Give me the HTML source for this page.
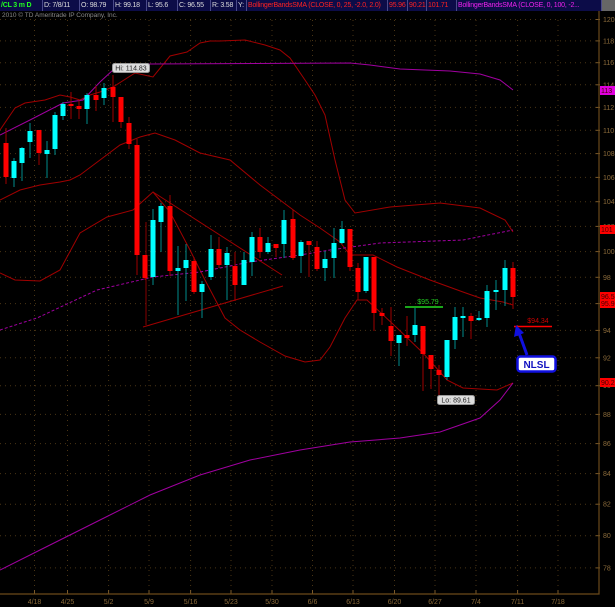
<!DOCTYPE html>
<html><head><meta charset="utf-8"><style>
html,body{margin:0;padding:0;background:#000;width:615px;height:607px;overflow:hidden;font-family:"Liberation Sans",sans-serif}
#hdr{position:absolute;left:0;top:0;width:615px;height:11px;background:#0c0c48;display:flex;font-size:7px;letter-spacing:-0.2px;line-height:11px;white-space:nowrap}
#hdr span{border-right:1px solid #4a4a8a;padding:0 1px;overflow:hidden;box-sizing:border-box}
#copy{position:absolute;left:2px;top:12px;font-size:6.5px;color:#888}
svg{position:absolute;left:0;top:0}
</style></head><body>
<svg id="s" width="615" height="607" viewBox="0 0 615 607"></svg>
<div id="hdr">
<span style="width:43px;color:#2f2;font-weight:bold">/CL 3 m D</span>
<span style="width:37px;color:#ddd">D: 7/8/11</span>
<span style="width:34px;color:#ddd">O: 98.79</span>
<span style="width:33px;color:#ddd">H: 99.18</span>
<span style="width:31px;color:#ddd">L: 95.6</span>
<span style="width:33px;color:#ddd">C: 96.55</span>
<span style="width:26px;color:#ddd">R: 3.58</span>
<span style="width:10px;color:#ddd">Y:</span>
<span style="width:141px;color:#f22">BollingerBandsSMA (CLOSE, 0, 25, -2.0, 2.0)</span>
<span style="width:20px;color:#f22">95.96</span>
<span style="width:19px;color:#f22">90.21</span>
<span style="width:30px;color:#f22">101.71</span>
<span style="width:145px;color:#e2e">BollingerBandsSMA (CLOSE, 0, 100, -2...</span>
<span style="width:13px;background:#666;border:none"></span>
</div>
<div id="copy">2010 © TD Ameritrade IP Company, Inc.</div>
<script>
var s=document.getElementById('s'),h='';
function Y(p){return 6114-1273*Math.log(p);}
for(var p=78;p<=120;p+=2){var y=Y(p).toFixed(1);
h+='<line x1="0" y1="'+y+'" x2="596" y2="'+y+'" stroke="#4a3515" stroke-width="1" stroke-dasharray="1,4"/>';
h+='<line x1="596" y1="'+y+'" x2="600" y2="'+y+'" stroke="#7a5a2a"/>';
h+='<text x="603" y="'+(+y+2.5)+'" font-size="7" fill="#8a6a3a" font-family="Liberation Sans">'+p+'</text>';}
var wx=[34.5,67.5,108.6,149,190.6,231,272,312.5,353,394.5,435,476,517.6,558],wl=['4/18','4/25','5/2','5/9','5/16','5/23','5/30','6/6','6/13','6/20','6/27','7/4','7/11','7/18'];
for(var i=0;i<wx.length;i++){h+='<line x1="'+wx[i]+'" y1="20" x2="'+wx[i]+'" y2="594" stroke="#4a3515" stroke-dasharray="1,4"/>';
h+='<line x1="'+wx[i]+'" y1="590" x2="'+wx[i]+'" y2="594" stroke="#7a5a2a"/>';
h+='<text x="'+wx[i]+'" y="604" font-size="7" fill="#8a6a3a" text-anchor="middle" font-family="Liberation Sans">'+wl[i]+'</text>';}
h+='<polyline points="0,594 599,594 599,11" fill="none" stroke="#6b4a1a" stroke-width="1.2"/>';
function pl(pts,c,w,d){h+='<polyline points="'+pts+'" fill="none" stroke="'+c+'" stroke-width="'+(w||1)+'"'+(d?' stroke-dasharray="'+d+'"':'')+'/>';}
var R='#a00000',P='#a000a0';
pl('0,130 15,108 25,103 45,100 60,95 70,97 80,100 90,95 100,92 113,87 135,73 153,77 170,56 187,52 200,43 210,41 220,41 245,40 265,45 280,50 290,58 305,80 315,95 325,115 335,160 345,200 355,213 390,207 440,203 480,208 505,220 513,232',R);
pl('0,200 20,190 40,185 60,182 70,180 80,175 100,160 120,145 140,137 155,133 175,140 200,153 230,160 260,185 280,200 300,215 320,228 340,242 350,255 373,255 397,267 430,280 463,292 480,298 503,302 513,305',R);
pl('0,273 15,280 40,281 60,270 80,233 107,217 133,210 153,192 170,212 190,250 205,280 225,318 240,330 260,342 285,356 305,362 320,360 330,347 345,318 357,300 367,300 395,326 423,353 447,380 463,388 497,390 513,383',R);
pl('0,135 30,120 63,103 83,100 100,82 113,70 150,64 350,63 370,65 400,69 450,71 480,74 500,80 513,90',P);
pl('0,330 37,318 97,290 153,277 200,272 250,262 300,255 330,250 380,243 463,240 513,230',P,1,'3,2');
pl('0,570 40,550 100,520 150,495 200,475 250,460 300,450 350,442 400,438 440,432 480,418 500,400 513,383',P);
pl('153,192 282,275',R);pl('143,327 283,286',R);
h+='<line x1="146" y1="222" x2="146" y2="325" stroke="#800"/>';
var C=[[6,143,177,128,184,0],[14,161,178,158,187,1],[22,148,163,147,181,1],[30,131,142,123,158,1],[39,130,153,130,165,0],[47,150,154,141,178,1],[55,115,149,112,155,1],[63,104,116,102,120,1],[71,104,106,92,119,0],[79,106,109,100,119,0],[87,95,109,93,124,1],[96,95,100,86,111,0],[104,88,98,83,105,1],[113,87,97,75,122,0],[121,97,122,97,128,0],[129,123,144,117,149,0],[137,145,255,139,275,0],[145,255,278,255,280,0],[153,220,277,209,285,1],[161,206,222,203,252,1],[170,206,271,195,276,0],[178,268,271,246,315,1],[186,260,268,244,301,1],[194,261,292,257,294,0],[202,284,292,281,318,1],[211,249,277,235,280,1],[219,249,265,237,268,0],[227,253,265,247,300,1],[235,266,285,252,301,0],[244,260,285,252,285,1],[252,237,262,232,276,1],[260,237,252,228,258,0],[268,243,252,237,254,1],[276,244,248,244,257,0],[284,220,244,210,258,1],[293,219,258,210,260,0],[301,242,256,240,273,1],[309,241,245,241,277,0],[317,247,269,241,271,0],[325,259,268,251,281,1],[334,243,258,228,278,1],[342,229,243,221,244,1],[350,229,267,229,271,0],[358,268,292,263,300,0],[366,257,291,257,293,1],[374,257,313,257,331,0],[382,313,316,308,325,0],[391,326,341,307,356,0],[399,335,343,335,366,1],[407,335,338,316,346,0],[415,325,335,308,342,1],[423,326,354,326,391,0],[431,355,369,355,389,0],[439,370,375,365,395,0],[447,340,377,340,380,1],[455,317,340,307,349,1],[463,316,318,307,337,1],[471,316,321,313,339,0],[479,318,320,311,321,1],[487,291,318,285,327,1],[496,290,292,280,310,1],[505,268,290,260,306,1],[513,268,297,262,309,0]];
C.forEach(function(c){var wc=c[5]?'#008b8b':'#a00000',bc=c[5]?'#00ffff':'#ff0000';
h+='<line x1="'+c[0]+'" y1="'+c[3]+'" x2="'+c[0]+'" y2="'+c[4]+'" stroke="'+wc+'"/>';
h+='<rect x="'+(c[0]-2.5)+'" y="'+c[1]+'" width="5" height="'+Math.max(1.5,c[2]-c[1])+'" fill="'+bc+'"/>';});
h+='<rect x="112.5" y="63.5" width="37" height="9" rx="2" fill="#ddd" stroke="#999"/><text x="131" y="70.5" font-size="7" text-anchor="middle" fill="#222" font-family="Liberation Sans">Hi: 114.83</text>';
h+='<rect x="437.5" y="395.5" width="37" height="9" rx="2" fill="#ddd" stroke="#999"/><text x="456" y="402.5" font-size="7" text-anchor="middle" fill="#222" font-family="Liberation Sans">Lo: 89.61</text>';
h+='<line x1="405" y1="307" x2="443" y2="307" stroke="#2d2" stroke-width="1.5"/><text x="428" y="304" font-size="7" text-anchor="middle" fill="#2c2" font-family="Liberation Sans">$95.79</text>';
h+='<line x1="514" y1="326.5" x2="552" y2="326.5" stroke="#f00" stroke-width="1.5"/><text x="538" y="323" font-size="7" text-anchor="middle" fill="#c00" font-family="Liberation Sans">$94.34</text>';
h+='<line x1="527" y1="355" x2="519" y2="333" stroke="#1010e0" stroke-width="3"/><polygon points="516,325 514,337 524,333" fill="#1010e0"/>';
h+='<rect x="517.5" y="356.5" width="38" height="15" rx="3" fill="#fff" stroke="#1010e0" stroke-width="2.5"/><text x="536.5" y="368" font-size="10" font-weight="bold" text-anchor="middle" fill="#1010c0" font-family="Liberation Sans">NLSL</text>';
function tag(y,t,c){h+='<rect x="600" y="'+(y-5)+'" width="15" height="9" fill="'+c+'"/><text x="601" y="'+(y+2)+'" font-size="7" fill="#400" font-family="Liberation Sans">'+t+'</text>';}
tag(91,'113','#e000e0');tag(230,'101','#f00');tag(297,'96.5','#f00');tag(304,'95.9','#f00');tag(383,'90.2','#f00');
s.innerHTML=h;
</script>
</body></html>
